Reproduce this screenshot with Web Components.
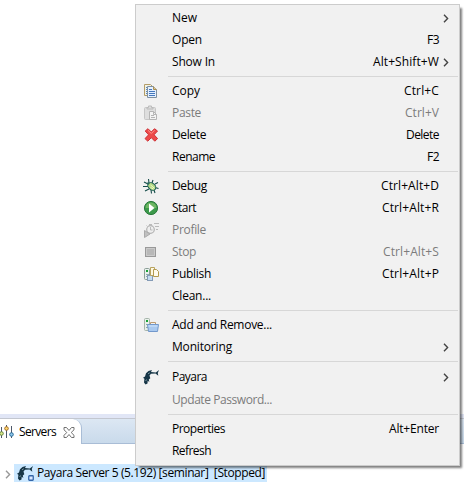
<!DOCTYPE html>
<html lang="en"><head><meta charset="utf-8"><title>Servers</title>
<style>
html,body{margin:0;width:464px;height:483px;overflow:hidden;background:#fff}
body{font:12px "Open Sans","Noto Sans",sans-serif;color:#000}
</style></head><body>
<app-window></app-window>
<script>
const ICONS={
copy:`<path d="M1.500 1.500h6l2 2v9h-8z" fill="#f3f3e4" stroke="#b39c68"/><path d="M3 4.500h2M3 6.500h2M3 8.500h2M3 10.500h2" stroke="#5685c4"/><path d="M4.500 3.500h6l3 3v8h-9z" fill="#e3efff" stroke="#7f90a0"/><path d="M10.500 3.500v3h3" fill="#e3c88c" stroke="#a88e55"/><path d="M6 6.500h3M6 8.500h6M6 10.500h6M6 12.500h6" stroke="#4478bd"/>`,
paste:`<rect x="1.500" y="2.500" width="11" height="12" rx="1" fill="#dedede" stroke="#c6c6c6"/><path d="M4 4V2.500h1.500V1h3v1.500H10V4z" fill="#ddd" stroke="#bbb"/><path d="M6.500 6.500h4l3 3v5h-7z" fill="#f4f4f4" stroke="#b5b5b5"/><path d="M10.500 6.500v3h3M8 10.500h3M8 12.500h4" fill="none" stroke="#b5b5b5"/>`,
del:`<path d="M5 1.700 8.300 5l3.200-3.300 3 2.300-3.400 3.800 3.500 3.800-2.800 2.600-3.500-3.500-3.500 3.500L2 11.600l3.600-3.800L2.200 4z" fill="#ed4a49" stroke="#cf3238" stroke-linejoin="round"/><path d="m5 3.300 3.300 3.200 3.200-3.200" fill="none" stroke="#ff9189"/>`,
debug:`<path d="M6 5 5.500 1M9 5l1-3M12 6l3-1.500M5 6 1 4M5 8.500H0M6 11l-4 2M8 12l.5 3.500M11 12l1 3M12 9.500l3.500 1" fill="none" stroke="#164d4b" stroke-width="1.100"/><ellipse cx="8.800" cy="8.500" rx="4.400" ry="3.200" transform="rotate(38 8.800 8.500)" fill="#b2d886" stroke="#175953"/><path d="m7.500 7 4 3.300M7.500 9.500l3 1.500" stroke="#effbc0"/><circle cx="5.200" cy="5.400" r="1.200" fill="#28665a"/>`,
start:`<circle cx="8" cy="8" r="6.600" fill="#3c9a4b" stroke="#2c7a3c"/><path d="M2.500 8a5.500 5.500 0 0 1 11 0z" fill="#6fb663"/><path d="M6 3.500v9l5.500-4.500z" fill="#fff"/>`,
profile:`<circle cx="7.500" cy="7.500" r="3.800" fill="#eee" stroke="#b2b2b2" stroke-width="1.200"/><path d="M7.500 5v3h2M6 2.500h3M7.500 2v2M3.500 3.500l1 1M11 1.500h5M12 4.500h4M13 7.500h2" fill="none" stroke="#bbb"/><path d="M1.500 8.500v7L7 12z" fill="#c0c0c0" stroke="#aaa"/>`,
stop:`<rect x="2.500" y="3.500" width="10" height="9" fill="#b8b8b8" stroke="#999"/><path d="M3.500 11.500v-7h8v7z" fill="none" stroke="#cacaca"/>`,
publish:`<rect x="1.500" y="2.500" width="5" height="11" rx="1" fill="#e8f0ec" stroke="#8b9e96"/><rect x="3" y="4" width="2" height="2" fill="#1ba238"/><path d="M3 8.500h3M3 10.500h3" stroke="#91a9b0"/><rect x="4.500" y="9.500" width="5" height="5" fill="#c5dcf1" stroke="#849bb6"/><path d="M7.500 1.500h4v8h-4z" fill="#fff9e2" stroke="#b8a360"/><path d="M10.500 3.500h3l2 2v5h-5z" fill="#fffbed" stroke="#b49b4f"/>`,
add:`<rect x="1.500" y="1.500" width="5" height="12" rx="1" fill="#e8f0ea" stroke="#a6b5aa"/><rect x="3" y="3" width="2" height="2" fill="#1ca338"/><path d="M3 7.500h2M3 10.500h2" stroke="#91aaa0"/><path d="M7.500 8V5.500h5V8" fill="none" stroke="#bd9b70"/><path d="M4.500 7.500h11l-1 7h-9z" fill="#a9c9ef" stroke="#7298cb"/><path d="M5.500 9h9" stroke="#d1e5fb"/>`,
fish:`<path d="M9 1 5.500 2 3 4.200 2 7.500 0 8.800l1.400 1L1 13.500 2.500 15.500l2-1 .2-2.800 1.600 1.300-.5-2.600L7.300 9.200 6.500 6.500 8 4.700 12.500 4.600 15.300 6.800 14.800 4 16 1 12.800 3.400 8 3.100z" fill="#173647"/><path d="m5.300 4.700 1.200-.8M2.600 11.500l1.100-.6" stroke="#b4d0da" stroke-width=".9"/>`,
servers:`<path d="M2.500 3v11M7.500 1v13M12.500 2v12" stroke="#4d5769"/><circle cx="2.500" cy="9.500" r="1.800" fill="#d9e98c" stroke="#68863e"/><circle cx="7.500" cy="4.500" r="1.800" fill="#ffd76d" stroke="#a66d23"/><circle cx="12.500" cy="10.500" r="1.800" fill="#90c8ec" stroke="#286b99"/>`,
close:`<path d="M1 .5h2.500l2.500 3 2.500-3H11v2.300L8.200 5.500 11 8.300v2.200H8.500L6 7.500l-2.500 3H1V8.300l2.800-2.800L1 2.800z" fill="#fff" stroke="#717171"/>`,
badge:`<rect x=".75" y=".75" width="4.500" height="4.500" rx=".7" fill="#dbe8ff" stroke="#3265a8" stroke-width="1.300"/>`,
arrow:`<path d="m1 .8 3.600 3.700L1 8.200" fill="none" stroke="currentColor" stroke-width="1.400"/>`};
const define=(name,html,init)=>{const t=document.createElement('template');t.innerHTML=html;
customElements.define(name,class extends HTMLElement{connectedCallback(){if(this.shadowRoot)return;this.attachShadow({mode:'open'}).append(t.content.cloneNode(true));init&&init(this,this.shadowRoot)}})};

define('ui-icon','<style>:host{display:block;flex:none}svg{display:block}</style><div></div>',(e,r)=>{
const w=e.getAttribute('w')||16,h=e.getAttribute('h')||16;
r.querySelector('div').innerHTML=`<svg width="${w}" height="${h}" viewBox="0 0 ${w} ${h}">${ICONS[e.getAttribute('name')]}</svg>`});

/* A single-line label whose tracking is adjusted to fill the given width. */
define('fit-text','<style>:host{display:block;flex:none;white-space:pre;line-height:16px}span{display:inline-block}</style><span></span>',(e,r)=>{
const s=r.querySelector('span'),text=e.getAttribute('text');s.textContent=text;
const target=+e.getAttribute('w'),d=(target-s.getBoundingClientRect().width)/text.length;
s.style.letterSpacing=d.toFixed(3)+'px';e.style.width=target+'px'});

define('menu-item',`<style>:host{display:grid;grid-template-columns:30px 4px 1fr auto 18px;height:22px;align-items:center}
:host([tall]){height:24px}:host([disabled]){color:#7c7c7c}
.i{padding-left:5px}.k{margin-right:1px}.a{color:#444;padding-left:3px}</style>
<div class="i"></div><i></i><div class="l"></div><div class="k"></div><div class="a"></div>`,(e,r)=>{
const g=n=>e.getAttribute(n),q=s=>r.querySelector(s);
if(g('icon'))q('.i').innerHTML=`<ui-icon name="${g('icon')}"></ui-icon>`;
q('.l').innerHTML=`<fit-text text="${g('label')}" w="${g('w')}"></fit-text>`;
if(g('key'))q('.k').innerHTML=`<fit-text text="${g('key')}" w="${g('kw')}"></fit-text>`;
if(e.hasAttribute('sub'))q('.a').innerHTML='<ui-icon name="arrow" w="6" h="9"></ui-icon>'});

define('menu-line','<style>:host{display:block;height:7px;box-sizing:border-box;padding:3px 0 0 30px}div{height:1px;background:#d7d7d7}</style><div></div>');

define('context-menu',`<style>:host{display:block;box-sizing:border-box;width:325px;height:462px;padding:2px 1px 2px 2px;border:1px solid #ccc;background:#f1f1f1;box-shadow:3px 3px 2px -1px rgba(0,0,0,.5)}</style><slot></slot>`);

define('view-tabs',`<style>:host{display:block}.strip{height:4px;background:#e1e6f6}
.bar{height:26px;box-sizing:border-box;display:flex;border-top:1px solid #c3c7d0;border-bottom:1px solid #a9bdd6;background:linear-gradient(#dce7f3,#c9daeb)}
.tab{box-sizing:border-box;width:82px;height:25px;background:#fff;border-right:1px solid #a9bdd6;border-radius:0 9px 0 0;display:flex;align-items:center;padding:1px 0 0}
fit-text{margin-left:4px}.c{margin-left:7px}.s{margin-left:-1px;margin-right:1px}</style>
<div class="strip"></div><div class="bar"><div class="tab"><ui-icon class="s" name="servers" w="15"></ui-icon><fit-text text="Servers" w="37"></fit-text><ui-icon class="c" name="close" w="12" h="11"></ui-icon></div></div>`);

define('tree-row',`<style>:host{display:flex;height:18px;align-items:center}.x{color:#999;margin:2px 0 0 5px;width:9px}
.r{display:flex;align-items:center;width:253px;height:18px;background:#cce8ff}.p{position:relative;margin-left:3px;margin-right:4px}.b{position:absolute;left:11px;top:10px}</style>
<ui-icon class="x" name="arrow" w="6" h="9"></ui-icon><div class="r"><div class="p"><ui-icon name="fish"></ui-icon><ui-icon class="b" name="badge" w="6" h="6"></ui-icon></div><fit-text text="Payara Server 5 (5.192) [seminar]  [Stopped]" w="228"></fit-text></div>`);

define('app-window',`<style>:host{display:block;position:relative;width:464px;height:483px;overflow:hidden}
.v{padding-top:414px}tree-row{margin-top:20px}context-menu{position:absolute;left:135px;top:4px}</style>
<div class="v"><view-tabs></view-tabs><tree-row></tree-row></div>
<context-menu>
<menu-item label="New" w="25" sub></menu-item>
<menu-item label="Open" w="30" key="F3" kw="12"></menu-item>
<menu-item label="Show In" w="43" key="Alt+Shift+W" kw="66" sub></menu-item>
<menu-line></menu-line>
<menu-item icon="copy" label="Copy" w="28" key="Ctrl+C" kw="35"></menu-item>
<menu-item icon="paste" label="Paste" w="29" key="Ctrl+V" kw="34" disabled></menu-item>
<menu-item icon="del" label="Delete" w="34" key="Delete" kw="33"></menu-item>
<menu-item label="Rename" w="43" key="F2" kw="12"></menu-item>
<menu-line></menu-line>
<menu-item icon="debug" label="Debug" w="35" key="Ctrl+Alt+D" kw="58"></menu-item>
<menu-item icon="start" label="Start" w="24" key="Ctrl+Alt+R" kw="57"></menu-item>
<menu-item icon="profile" label="Profile" w="34" disabled></menu-item>
<menu-item icon="stop" label="Stop" w="24" key="Ctrl+Alt+S" kw="56" disabled></menu-item>
<menu-item icon="publish" label="Publish" w="39" key="Ctrl+Alt+P" kw="57"></menu-item>
<menu-item label="Clean..." w="39"></menu-item>
<menu-line></menu-line>
<menu-item icon="add" label="Add and Remove..." w="100"></menu-item>
<menu-item label="Monitoring" w="60" sub></menu-item>
<menu-line></menu-line>
<menu-item icon="fish" label="Payara" w="35" sub tall></menu-item>
<menu-item label="Update Password..." w="100" disabled></menu-item>
<menu-line></menu-line>
<menu-item label="Properties" w="53" key="Alt+Enter" kw="50"></menu-item>
<menu-item label="Refresh" w="39"></menu-item>
</context-menu>`);
</script></body></html>
